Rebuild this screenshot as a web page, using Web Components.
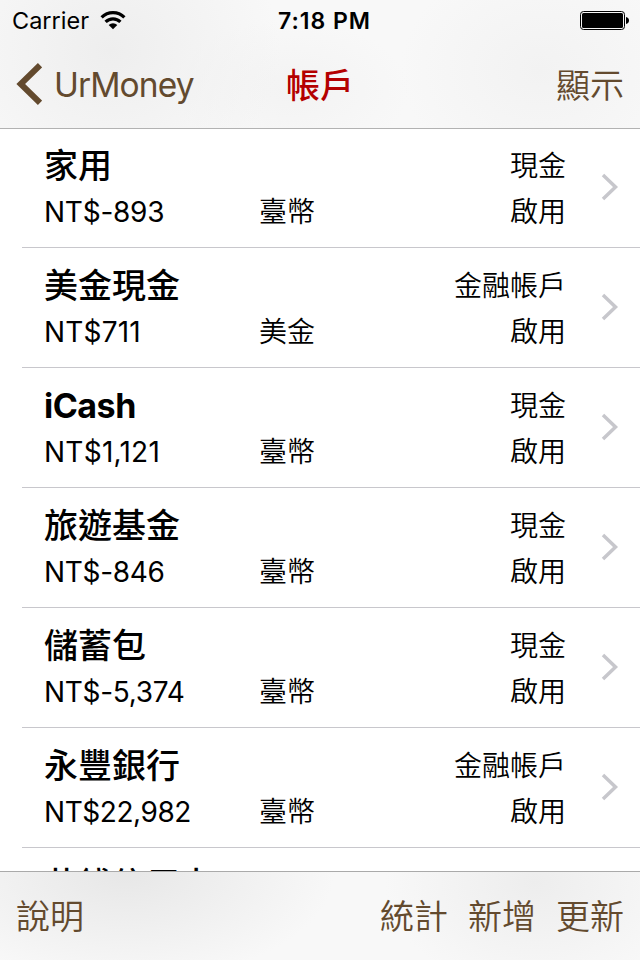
<!DOCTYPE html>
<html lang="zh-Hant">
<head>
<meta charset="utf-8">
<title>UrMoney</title>
<style>
  body {
    margin: 0;
    background: #fff;
  }
</style>
</head>
<body>
<money-app>
  <status-bar slot="top" carrier="Carrier" time="7:18 PM"></status-bar>
  <nav-bar slot="top" back="UrMoney" heading="帳戶" action="顯示"></nav-bar>

  <account-row name="家用" amount="NT$-893" tracking="-.25px" currency="臺幣" kind="現金" state="啟用"></account-row>
  <account-row name="美金現金" amount="NT$711" tracking=".2px" currency="美金" kind="金融帳戶" state="啟用"></account-row>
  <account-row name="iCash" amount="NT$1,121" tracking=".25px" currency="臺幣" kind="現金" state="啟用"></account-row>
  <account-row name="旅遊基金" amount="NT$-846" tracking="-.3px" currency="臺幣" kind="現金" state="啟用"></account-row>
  <account-row name="儲蓄包" amount="NT$-5,374" tracking="-.3px" currency="臺幣" kind="現金" state="啟用"></account-row>
  <account-row name="永豐銀行" amount="NT$22,982" tracking="-.45px" currency="臺幣" kind="金融帳戶" state="啟用"></account-row>
  <account-row name="花錢信用卡"></account-row>

  <tool-bar slot="bottom">
    <span slot="left">說明</span>
    <span>統計</span>
    <span>新增</span>
    <span>更新</span>
  </tool-bar>
</money-app>

<script>
class MoneyApp extends HTMLElement {
  constructor() {
    super();
    this.attachShadow({ mode: "open" });
  }

  connectedCallback() {
    this.shadowRoot.innerHTML = `
    <header><slot name="top"></slot></header>
    <main><slot></slot></main>
    <footer><slot name="bottom"></slot></footer>

    <style>
    :host {
      display: flex;
      flex-direction: column;
      width: 640px;
      height: 960px;
      overflow: hidden;
      color: #000;
      font-family: Inter, "Noto Sans CJK TC", sans-serif;
    }

    header {
      flex: none;
      box-sizing: border-box;
      height: 129px;
      border-bottom: 1px solid #b2b2b2;
      background:
        radial-gradient(ellipse 170px 150px at 110px 50px, #eee, transparent),
        radial-gradient(ellipse 140px 110px at 540px 70px, #f2f2f2, transparent),
        radial-gradient(ellipse 120px 70px at 290px 90px, #f3f3f3, transparent),
        #f8f8f8;
    }

    main {
      flex: 1;
      min-height: 0;
      margin-top: -1px;
      overflow: hidden;
    }

    footer {
      flex: none;
      box-sizing: border-box;
      height: 89px;
      border-top: 1px solid #aaa;
      background:
        radial-gradient(ellipse 210px 110px at 125px 0, #e7e7e7, transparent),
        radial-gradient(ellipse 150px 110px at 535px 10px, #ededed, transparent),
        #f8f8f8;
    }
    </style>
    `;
  }
}

customElements.define("money-app", MoneyApp);

class StatusBar extends HTMLElement {
  constructor() {
    super();
    this.attachShadow({ mode: "open" });
  }

  connectedCallback() {
    this.shadowRoot.innerHTML = `
    <div class="left">
      <span class="carrier">${this.getAttribute("carrier")}</span>
      <svg width="26" height="20" viewBox="0 0 26 20">
        <g fill="none" stroke="#000" stroke-width="3.2">
          <path d="M1.600 7.300a16.200 16.200 0 0 1 22.800 0"/>
          <path d="M5.600 11.900a10.500 10.500 0 0 1 14.800 0"/>
        </g>
        <path d="M8.700 15a6.100 6.100 0 0 1 8.600 0L13 19.300z"/>
      </svg>
    </div>
    <span class="time">${this.getAttribute("time")}</span>
    <svg class="battery" width="49" height="19" viewBox="0 0 49 19">
      <rect x=".5" y=".5" width="44" height="18" rx="3" fill="none" stroke="#000"/>
      <rect x="2" y="2" width="41" height="15" rx="1.5"/>
      <path d="M46 6q3 .8 3 3.5t-3 3.5z"/>
    </svg>

    <style>
    :host {
      display: grid;
      grid-template-columns: 1fr auto 1fr;
      align-items: center;
      height: 40px;
      padding: 0 11px 0 12px;
      font-size: 23.5px;
    }

    .left {
      display: flex;
      align-items: center;
      gap: 11px;
    }

    .time {
      padding: 2px 0 0 8px;
      font-weight: 600;
      font-size: 23px;
      letter-spacing: 1px;
    }

    .battery {
      justify-self: end;
    }
    </style>
    `;
  }
}

customElements.define("status-bar", StatusBar);

class NavBar extends HTMLElement {
  constructor() {
    super();
    this.attachShadow({ mode: "open" });
  }

  connectedCallback() {
    this.shadowRoot.innerHTML = `
    <div class="back">
      <svg width="26" height="42" viewBox="0 0 26 42">
        <path d="M24 2.2 4.7 21 24 39.8" fill="none" stroke="#634a2e" stroke-width="6"/>
      </svg>
      <span class="label">${this.getAttribute("back")}</span>
    </div>
    <span class="heading">${this.getAttribute("heading")}</span>
    <span class="action">${this.getAttribute("action")}</span>

    <style>
    :host {
      display: grid;
      grid-template-columns: 1fr auto 1fr;
      align-items: center;
      height: 88px;
      padding: 0 16px;
      font-size: 34px;
      line-height: 50px;
      color: #634a2e;
    }

    .back {
      display: flex;
      align-items: center;
      gap: 12px;
    }

    .label {
      padding-top: 1px;
      letter-spacing: -.9px;
      font-size: 33.5px;
      font-weight: 380;
    }

    .heading, .action {
      padding-top: 3px;
    }

    .heading {
      font-weight: 500;
      color: #b40000;
    }

    .action {
      justify-self: end;
      font-weight: 350;
    }
    </style>
    `;
  }
}

customElements.define("nav-bar", NavBar);

class AccountRow extends HTMLElement {
  constructor() {
    super();
    this.attachShadow({ mode: "open" });
  }

  getAtt(attr) {
    return this.getAttribute(attr) ?? "";
  }

  connectedCallback() {
    let name = this.getAtt("name");
    let latin = /^[\w ]+$/.test(name) ? "latin" : "";

    this.shadowRoot.innerHTML = `
    <div class="cells">
      <span class="name ${latin}">${name}</span>
      <span class="kind">${this.getAtt("kind")}</span>
      <span class="amount">${this.getAtt("amount")}</span>
      <span>${this.getAtt("currency")}</span>
      <span class="state">${this.getAtt("state")}</span>
    </div>
    <svg width="18" height="28" viewBox="0 0 18 28">
      <path d="m2 2 12.5 12L2 26" fill="none" stroke="#c7c7cc" stroke-width="3.5"/>
    </svg>

    <style>
    :host {
      display: flex;
      align-items: center;
      justify-content: space-between;
      box-sizing: border-box;
      height: 120px;
      margin-left: 22px;
      padding: 0 21px 2px 22px;
      border-bottom: 1px solid #c8c7cc;
      font-size: 28px;
      font-weight: 350;
    }

    :host(:last-of-type) .cells {
      padding-top: 2px;
    }

    .cells {
      display: grid;
      grid-template-columns: 215px 1fr auto;
      grid-template-rows: 46px 46px;
      align-items: center;
      width: 522px;
      padding-top: 4px;
      line-height: 46px;
    }

    .name {
      grid-column: 1 / 3;
      font-size: 34px;
      font-weight: 500;
    }

    .latin {
      font-weight: 700;
      letter-spacing: -.5px;
    }

    .amount {
      font-weight: 400;
      letter-spacing: ${this.getAtt("tracking") || "normal"};
    }

    .kind, .state {
      text-align: right;
    }
    </style>
    `;
  }
}

customElements.define("account-row", AccountRow);

class ToolBar extends HTMLElement {
  constructor() {
    super();
    this.attachShadow({ mode: "open" });
  }

  connectedCallback() {
    this.shadowRoot.innerHTML = `
    <slot name="left"></slot>
    <div class="right"><slot></slot></div>

    <style>
    :host {
      display: flex;
      align-items: center;
      justify-content: space-between;
      box-sizing: border-box;
      height: 88px;
      padding: 2px 16px 0;
      font-size: 34px;
      font-weight: 350;
      line-height: 50px;
      color: #634a2e;
    }

    .right {
      display: flex;
      gap: 20px;
    }
    </style>
    `;
  }
}

customElements.define("tool-bar", ToolBar);
</script>
</body>
</html>
